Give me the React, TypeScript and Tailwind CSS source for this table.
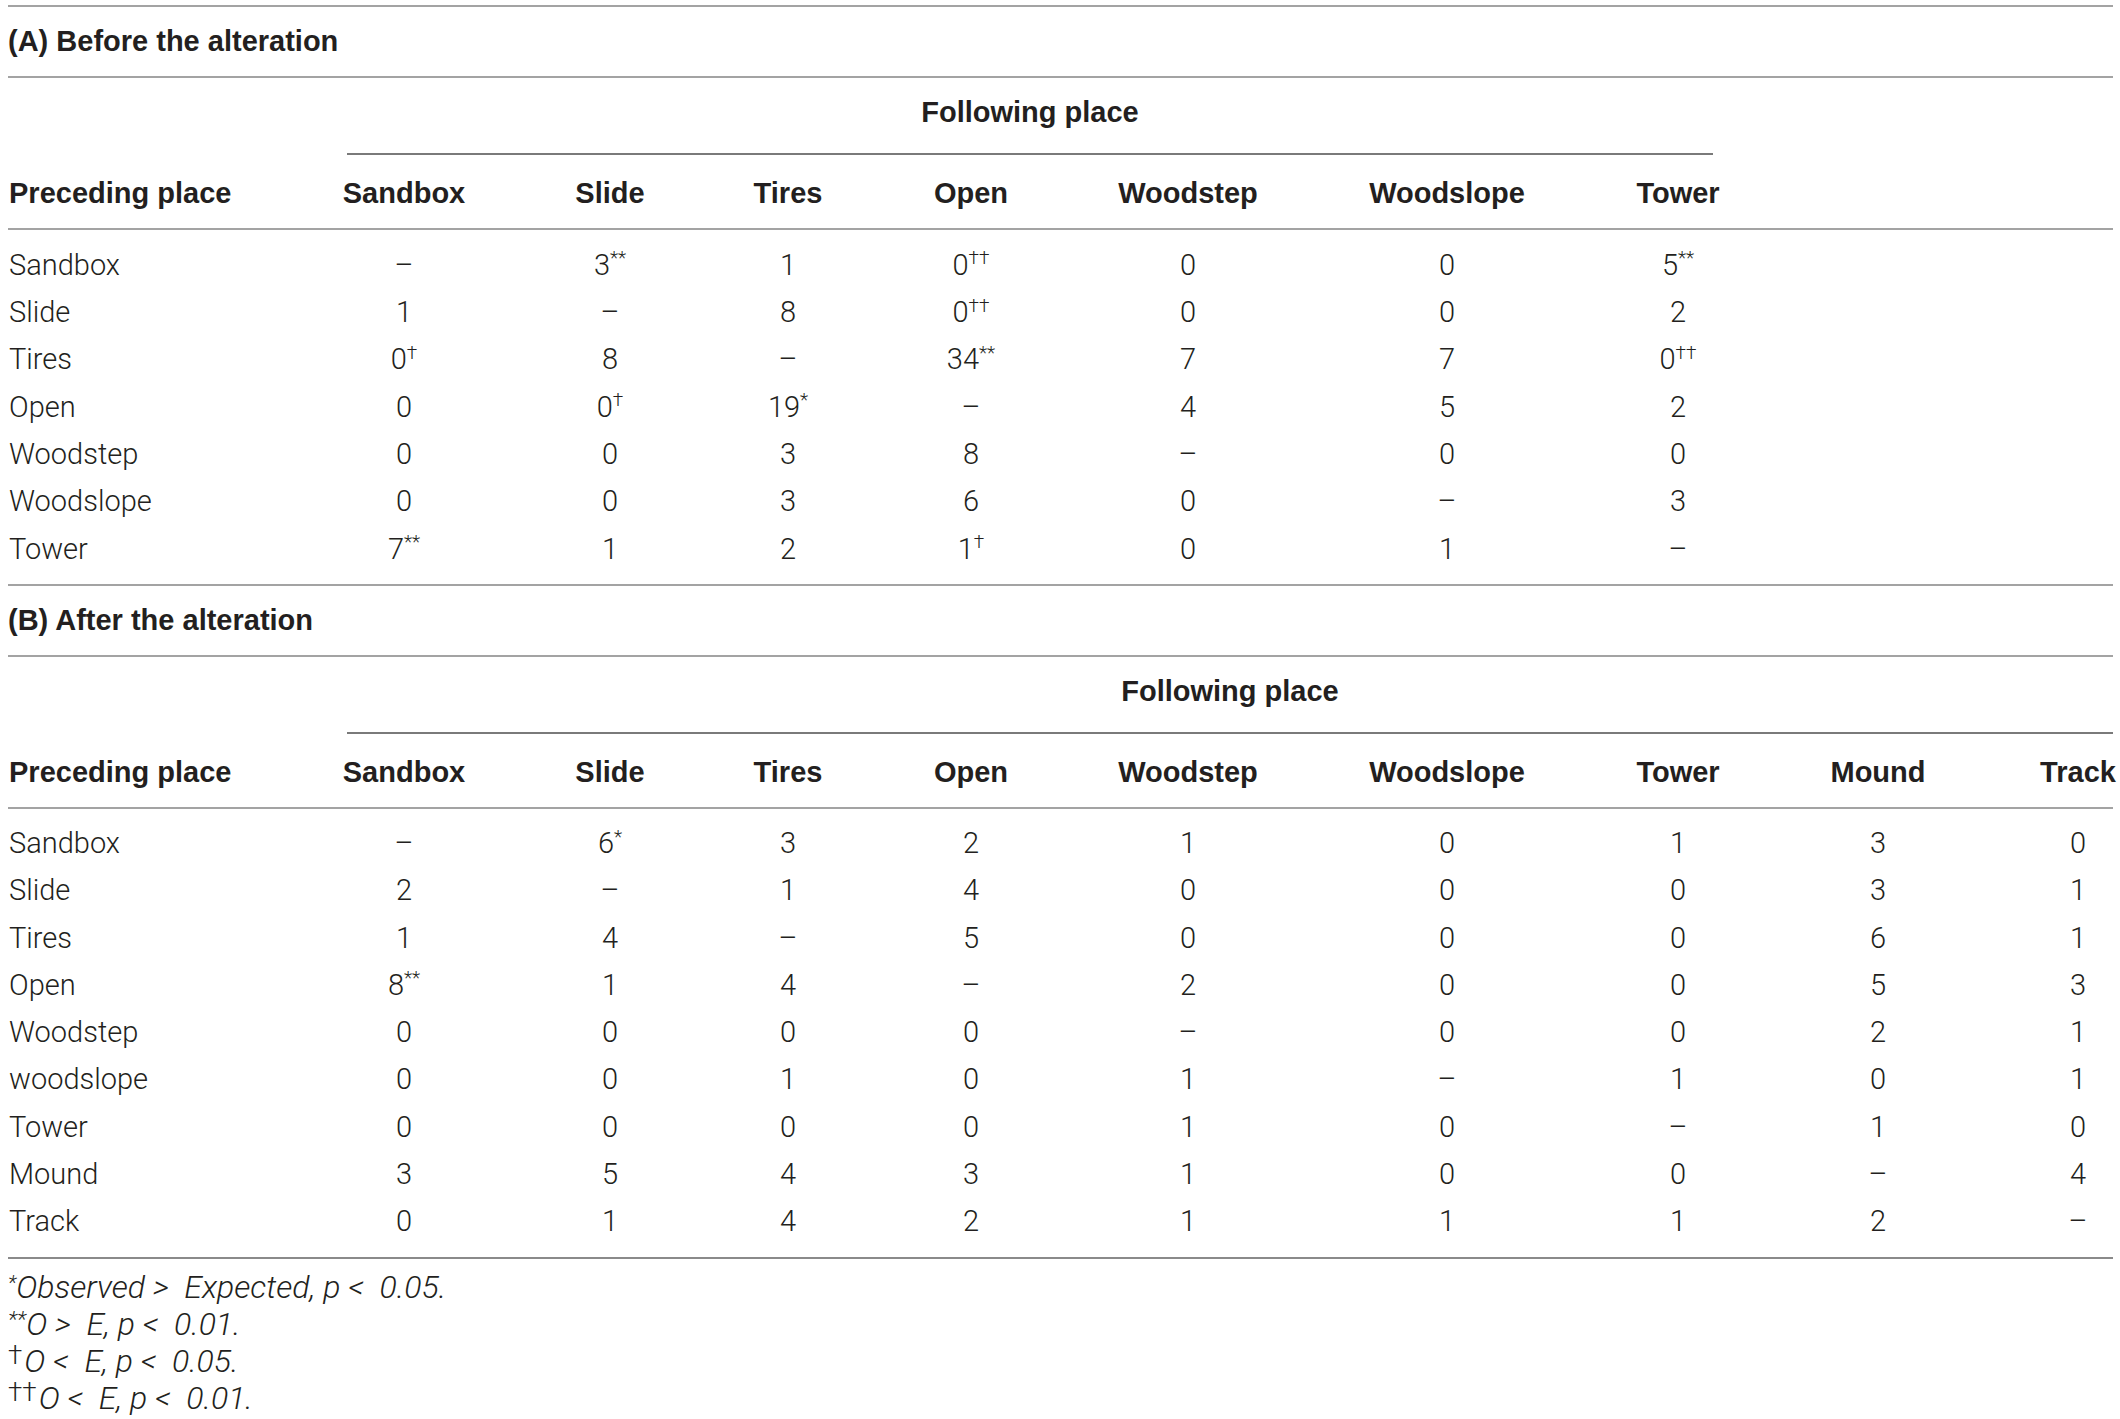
import React from "react";

// shared column template so both tables line up
const COLS =
  "grid grid-cols-[339px_114px_298px_58px_308px_126px_392px_70px_330px_70px]";

const bold = "font-['Liberation_Sans',Arial,sans-serif] font-bold text-[29px]";

const tableA = {
  title: "(A) Before the alteration",
  cols: ["Sandbox", "Slide", "Tires", "Open", "Woodstep", "Woodslope", "Tower"],
  rows: [
    ["Sandbox", "–", "3**", "1", "0††", "0", "0", "5**"],
    ["Slide", "1", "–", "8", "0††", "0", "0", "2"],
    ["Tires", "0†", "8", "–", "34**", "7", "7", "0††"],
    ["Open", "0", "0†", "19*", "–", "4", "5", "2"],
    ["Woodstep", "0", "0", "3", "8", "–", "0", "0"],
    ["Woodslope", "0", "0", "3", "6", "0", "–", "3"],
    ["Tower", "7**", "1", "2", "1†", "0", "1", "–"],
  ],
};

const tableB = {
  title: "(B) After the alteration",
  cols: [
    "Sandbox",
    "Slide",
    "Tires",
    "Open",
    "Woodstep",
    "Woodslope",
    "Tower",
    "Mound",
    "Track",
  ],
  rows: [
    ["Sandbox", "–", "6*", "3", "2", "1", "0", "1", "3", "0"],
    ["Slide", "2", "–", "1", "4", "0", "0", "0", "3", "1"],
    ["Tires", "1", "4", "–", "5", "0", "0", "0", "6", "1"],
    ["Open", "8**", "1", "4", "–", "2", "0", "0", "5", "3"],
    ["Woodstep", "0", "0", "0", "0", "–", "0", "0", "2", "1"],
    ["woodslope", "0", "0", "1", "0", "1", "–", "1", "0", "1"],
    ["Tower", "0", "0", "0", "0", "1", "0", "–", "1", "0"],
    ["Mound", "3", "5", "4", "3", "1", "0", "0", "–", "4"],
    ["Track", "0", "1", "4", "2", "1", "1", "1", "2", "–"],
  ],
};

function Value({ v }: { v: string }) {
  const m = v.match(/^([^*†]+)([*†]*)$/);
  const base = m ? m[1] : v;
  const mark = m ? m[2] : "";
  return (
    <span className="whitespace-nowrap">
      {base}
      {mark && <sup className="text-[19px] top-[-0.55em]">{mark}</sup>}
    </span>
  );
}

function Section({ data }: { data: typeof tableB }) {
  const wide = data.cols.length === 9;
  return (
    <div>
      <div className="h-[69px] flex items-center border-t-2 border-[#a3a3a3] border-b-2 box-content">
        <h2 className={bold}>{data.title}</h2>
      </div>

      <div className={COLS}>
        <div />
        <div
          className={
            (wide ? "col-span-9" : "col-span-7") +
            " h-[77px] flex items-center justify-center pb-[6px] border-b-2 border-[#7a7a7a]"
          }
        >
          <span className={bold}>Following place</span>
        </div>
      </div>

      <div className={COLS + " h-[75px] pt-[5px] items-center border-b-2 border-[#a3a3a3]"}>
        <div className={bold + " pl-[1px]"}>Preceding place</div>
        {data.cols.map((c) => (
          <div key={c} className={bold + " flex justify-center whitespace-nowrap"}>
            {c}
          </div>
        ))}
      </div>

      <div className={wide ? "pt-[11px] pb-[11px]" : "pt-[12px] pb-[11px]"}>
        {data.rows.map((r) => (
          <div key={r[0]} className={COLS + " h-[47.3px] items-center font-light text-[29px]"}>
            <div className="pl-[1px]">{r[0]}</div>
            {r.slice(1).map((v, i) => (
              <div key={i} className="flex justify-center">
                <Value v={v} />
              </div>
            ))}
          </div>
        ))}
      </div>
    </div>
  );
}

export default function App() {
  return (
    <div className="w-[2120px] h-[1419px] overflow-hidden bg-white text-[#231f20] pl-[8px] pr-[7px] pt-[5px] font-['Roboto','Liberation_Sans',sans-serif]">
      <Section data={tableA} />
      <div className="border-t-2 border-[#a3a3a3]" />
      <div className="-mt-[2px]">
        <Section data={tableB} />
      </div>
      <div className="border-t-2 border-[#8a8a8a] pt-[10px] italic font-light text-[32px] leading-[37px]">
        <p>
          <sup className="text-[20px] top-[-0.4em]">*</sup>Observed &gt;&nbsp; Expected, p &lt;&nbsp; 0.05.
        </p>
        <p>
          <sup className="text-[22px] top-[-0.35em]">**</sup>O &gt;&nbsp; E, p &lt;&nbsp; 0.01.
        </p>
        <p>
          <sup className="not-italic text-[26px] top-[-0.3em] pr-[2px]">†</sup>O &lt;&nbsp; E, p &lt;&nbsp; 0.05.
        </p>
        <p>
          <sup className="not-italic text-[26px] top-[-0.3em] pr-[2px]">††</sup>O &lt;&nbsp; E, p &lt;&nbsp; 0.01.
        </p>
      </div>
    </div>
  );
}
